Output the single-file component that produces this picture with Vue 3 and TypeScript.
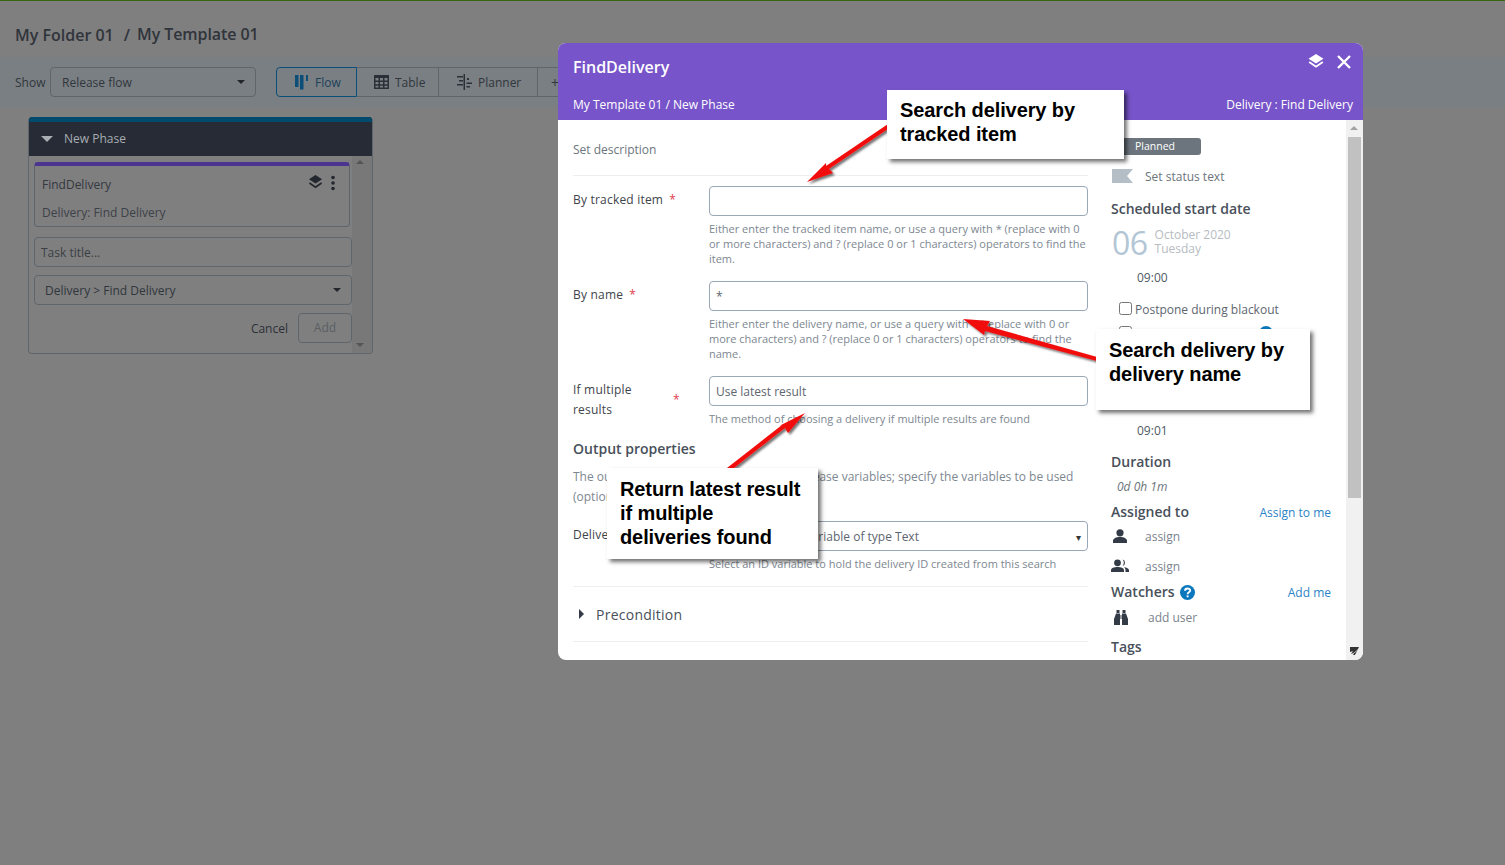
<script setup lang="ts">
interface Field {
  label: string
  value: string
  help: string[]
  wide?: boolean
}
const fields: Field[] = [
  {
    label: 'By tracked item',
    value: '',
    help: [
      'Either enter the tracked item name, or use a query with * (replace with 0',
      'or more characters) and ? (replace 0 or 1 characters) operators to find the',
      'item.'
    ]
  },
  {
    label: 'By name',
    value: '*',
    help: [
      'Either enter the delivery name, or use a query with * (replace with 0 or',
      'more characters) and ? (replace 0 or 1 characters) operators to find the',
      'name.'
    ]
  },
  {
    label: 'If multiple results',
    value: 'Use latest result',
    wide: true,
    help: ['The method of choosing a delivery if multiple results are found']
  }
]
</script>

<template>
  <div class="page">
    <div class="topline"></div>
    <div class="crumbs"><span class="c-a">My Folder 01</span><span class="sep">/</span><span class="c-b">My Template 01</span></div>
    <div class="toolbar">
      <span class="show">Show</span>
      <div class="dark-select release"><span>Release flow</span><i class="caret"></i></div>
      <div class="tabs">
        <div class="tab active">
          <svg width="13" height="15" viewBox="0 0 13 15"><path fill="#0b4f78" d="M0 0h3.500v12H0zM5 0h3.500v14.500H5zM11 0h2v6h-2z"/></svg>
          <span>Flow</span>
        </div>
        <div class="tab t-table">
          <svg width="15" height="14" viewBox="0 0 15 14"><path fill="#2b3038" d="M0 0h15v14H0zm1.500 3v2.500h3V3zm4.500 0v2.500h3V3zm4.500 0v2.500h3V3zM1.500 7v2.300h3V7zM6 7v2.300h3V7zm4.500 0v2.300h3V7zm-9 3.800v1.700h3v-1.700zm4.500 0v1.700h3v-1.700zm4.500 0v1.700h3v-1.700z"/></svg>
          <span>Table</span>
        </div>
        <div class="tab t-plan">
          <svg width="15" height="16" viewBox="0 0 15 16"><path fill="#2b3038" d="M6.500 0H8v16H6.500zM0 2h6v1.600H0zM2 6h4v1.600H2zM0 10h6v1.600H0zM10 4h2v2h-2zM9.500 8.500H15v1.600H9.500zM9.500 12H13v1.600H9.500z"/></svg>
          <span>Planner</span>
        </div>
        <div class="tab stub">+</div>
      </div>
    </div>

    <div class="phase">
      <div class="phase-head"><i class="caret-lg"></i><span>New Phase</span></div>
      <div class="phase-body">
        <div class="phase-main">
          <div class="card">
            <div class="card-title">
              <span>FindDelivery</span>
              <span class="card-icons">
                <svg width="15" height="15" viewBox="0 0 16 16"><path fill="#23272e" d="M8 0l7 4.500L8 9 1 4.500z"/><path fill="none" stroke="#23272e" stroke-width="1.800" d="M1.500 8.500L8 13l6.500-4.500"/></svg>
                <svg width="6" height="16" viewBox="0 0 6 16"><circle cx="3" cy="2.500" r="1.800" fill="#23272e"/><circle cx="3" cy="8" r="1.800" fill="#23272e"/><circle cx="3" cy="13.500" r="1.800" fill="#23272e"/></svg>
              </span>
            </div>
            <div class="card-sub">Delivery: Find Delivery</div>
          </div>
          <div class="dark-input task">Task title...</div>
          <div class="dark-select kind"><span>Delivery &gt; Find Delivery</span><i class="caret"></i></div>
          <div class="phase-actions"><span>Cancel</span><div class="add">Add</div></div>
        </div>
        <div class="phase-scroll"><i class="up"></i><i class="down"></i></div>
      </div>
    </div>

    <div class="modal">
      <div class="modal-head">
        <div class="head-row">
          <span class="modal-title">FindDelivery</span>
          <span class="head-icons">
            <svg width="16" height="15" viewBox="0 0 16 15"><path fill="#fff" d="M8 0l7.500 4.700L8 9.400.5 4.700z"/><path fill="none" stroke="#fff" stroke-width="1.800" d="M1.200 8L8 12.700 14.800 8"/></svg>
            <svg width="14" height="14" viewBox="0 0 14 14"><path stroke="#fff" stroke-width="2.400" d="M1 1l12 12M13 1L1 13"/></svg>
          </span>
        </div>
        <div class="sub-row"><span>My Template 01 / New Phase</span><span>Delivery : Find Delivery</span></div>
      </div>

      <div class="modal-body">
        <div class="left">
          <div class="desc">Set description</div>
          <div v-for="f in fields" :key="f.label" class="field">
            <div class="label" :class="{ wrap: f.wide }"><span class="label-text">{{ f.label }}</span><span class="star">*</span></div>
            <div>
              <div class="input">{{ f.value }}</div>
              <div class="help"><div v-for="line in f.help" :key="line">{{ line }}</div></div>
            </div>
          </div>
          <div class="out-title">Output properties</div>
          <div class="out-text">The output properties of this task are in release variables; specify the variables to be used<br />(optional)</div>
          <div class="field last">
            <div class="label"><span class="label-text">Delivery ID</span></div>
            <div>
              <div class="input select-input"><span>Select a release variable of type Text</span><i>▾</i></div>
              <div class="help">Select an ID variable to hold the delivery ID created from this search</div>
            </div>
          </div>
          <div class="section"><i class="tri"></i><span>Precondition</span></div>
        </div>

        <div class="right">
          <div class="badge">Planned</div>
          <div class="status">
            <svg width="21" height="14" viewBox="0 0 21 14"><path fill="#b3bec7" d="M0 0h21l-6 7 6 7H0z"/></svg>
            <span class="low">Set status text</span>
          </div>
          <div class="h r-sched">Scheduled start date</div>
          <div class="date">
            <span class="day">06</span>
            <span class="month"><span>October 2020</span><span>Tuesday</span></span>
          </div>
          <div class="time t1">09:00</div>
          <label class="check c1"><input type="checkbox" /><span class="low">Postpone during blackout</span></label>
          <div class="check c2"><input type="checkbox" /><span class="dot"></span></div>
          <div class="time t2">09:01</div>
          <div class="h r-dur">Duration</div>
          <div class="dur">0d 0h 1m</div>
          <div class="split r-assign"><span class="h">Assigned to</span><a class="low">Assign to me</a></div>
          <div class="who w1">
            <svg width="16" height="14" viewBox="0 0 16 14"><circle cx="8" cy="3.800" r="3.600" fill="#333b47"/><path fill="#333b47" d="M1 14v-2c0-2.500 3-4 7-4s7 1.500 7 4v2z"/></svg>
            <span class="low">assign</span>
          </div>
          <div class="who w2">
            <svg width="18" height="14" viewBox="0 0 18 14"><circle cx="6.500" cy="3.800" r="3.400" fill="#333b47"/><path fill="#333b47" d="M11.500.600a3.300 3.300 0 010 6.400 5 5 0 000-6.400z"/><path fill="#333b47" d="M0 13v-1.800C0 9 3 8 6.500 8s6.500 1 6.500 3.200V13z"/><path fill="#333b47" d="M13 8.300c2.700.3 5 1.300 5 3V13h-3.500v-2c0-1-.6-2-1.500-2.700z"/></svg>
            <span class="low">assign</span>
          </div>
          <div class="split r-watch">
            <span class="watch"><span class="h">Watchers</span><svg width="15" height="15" viewBox="0 0 16 16"><circle cx="8" cy="8" r="8" fill="#0b78bd"/><path fill="none" stroke="#fff" stroke-width="2" d="M5.300 6.200c0-3.300 5.600-3.300 5.600-.3 0 1.900-2.800 2-2.800 3.900"/><circle cx="8.100" cy="12" r="1.200" fill="#fff"/></svg></span>
            <a class="low">Add me</a>
          </div>
          <div class="who w3">
            <svg width="14" height="15" viewBox="0 0 14 15"><path fill="#333b47" d="M2.500 0h3v3h-3zM8.500 0h3v3h-3zM2 3.500h4V15H0V9zM8 3.500h4L14 9v6H8zM6.500 5h1v4h-1z"/></svg>
            <span class="low">add user</span>
          </div>
          <div class="h r-tags">Tags</div>
        </div>

        <div class="modal-scroll">
          <i class="up"></i>
          <div class="thumb"></div>
          <svg class="grip" width="9" height="8" viewBox="0 0 9 8"><path fill="#333" d="M0 0h9L5 8H3l1-2-3 1 2-3-3 1z"/><path fill="none" stroke="#eee" stroke-width=".7" d="M2 7.500L9 2M5 8l4-3"/></svg>
        </div>
      </div>
    </div>

    <svg class="arrows" width="1505" height="865" viewBox="0 0 1505 865">
      <defs>
        <filter id="arrow-shadow" x="-20%" y="-20%" width="150%" height="150%">
          <feDropShadow dx="2" dy="2" stdDeviation="1.200" flood-color="#000" flood-opacity=".55" />
        </filter>
      </defs>
      <g fill="#f20d0d" filter="url(#arrow-shadow)">
        <path d="M888 124v5l-59 40 4 4-26 9 19-19 0 3z" />
        <path d="M963 319l27 2-3 5 110 31v4l-112-30-1 4z" />
        <path d="M805 413l-17 20-3-5-51 40h-7l55-43-3 1z" />
      </g>
    </svg>

    <div class="callout one">Search delivery by<br />tracked item</div>
    <div class="callout two">Search delivery by<br />delivery name</div>
    <div class="callout three">Return latest result<br />if multiple<br />deliveries found</div>
  </div>
</template>

<style>
html, body { margin: 0; padding: 0; background: #7f7f7f; }
</style>

<style scoped>
.page {
  position: relative;
  width: 1505px;
  height: 865px;
  overflow: hidden;
  background: #7f7f7f;
  font-family: "Open Sans", sans-serif;
  font-size: 12px;
  color: #2c3038;
}
.topline { height: 1px; background: #37640f; }
.crumbs {
  height: 56px;
  box-sizing: border-box;
  padding: 22px 0 0 15px;
  font-size: 16px;
  line-height: 22px;
  font-weight: 600;
  color: #30343b;
  display: flex;
}
.c-a { position: relative; top: 1px; }
.c-b { letter-spacing: -.08px; }
.sep { margin: 1px 7px 0 10px; }
.toolbar {
  height: 50px;
  box-sizing: border-box;
  background: #7a7f83;
  display: flex;
  align-items: center;
  padding: 0 0 0 15px;
  color: #30363c;
}
.show { width: 35px; }
.dark-select {
  display: flex;
  align-items: center;
  justify-content: space-between;
  box-sizing: border-box;
  height: 30px;
  border: 1px solid #5e666c;
  border-radius: 4px;
  color: #30363c;
}
.release { width: 206px; padding: 0 10px 0 11px; }
.caret {
  width: 0; height: 0;
  border-left: 4px solid transparent;
  border-right: 4px solid transparent;
  border-top: 4px solid #22262c;
}
.tabs { display: flex; margin-left: 20px; height: 30px; }
.tab {
  box-sizing: border-box;
  height: 30px;
  display: flex;
  align-items: center;
  border: 1px solid #5e666c;
  border-left: 0;
  color: #30363c;
}
.active {
  width: 81px;
  border: 1px solid #0b4f78;
  border-radius: 4px 0 0 4px;
  color: #1c4159;
  padding-left: 18px;
  gap: 7px;
}
.active svg { margin-top: 1px; }
.t-table { width: 82px; padding-left: 17px; gap: 6px; }
.t-plan { width: 99px; padding-left: 18px; gap: 6px; }
.stub { width: 40px; padding-left: 13px; font-size: 14px; }

.phase {
  box-sizing: border-box;
  width: 345px;
  height: 237px;
  margin: 10px 0 0 28px;
  border: 1px solid #5f666b;
  border-top: 0;
  border-radius: 4px;
  overflow: hidden;
}
.phase-head {
  box-sizing: border-box;
  height: 39px;
  margin: 0 -1px;
  background: #262b35;
  border-top: 5px solid #004a6e;
  padding: 0 0 2px 13px;
  display: flex;
  align-items: center;
  color: #a8adb3;
  gap: 11px;
}
.caret-lg {
  width: 0; height: 0;
  margin-top: 2px;
  border-left: 6px solid transparent;
  border-right: 6px solid transparent;
  border-top: 6px solid #a8adb3;
}
.phase-body { display: flex; height: 197px; }
.phase-main { width: 323px; padding: 6px 0 0 5px; box-sizing: border-box; }
.card {
  width: 316px;
  height: 65px;
  box-sizing: border-box;
  border: 1px solid #5e666c;
  border-top: 4px solid #4b3590;
  border-radius: 4px;
  padding: 0 7px;
  color: #34383f;
}
.card-title {
  display: flex;
  justify-content: space-between;
  align-items: center;
  height: 36px;
}
.card-icons { display: flex; align-items: center; gap: 7px; padding-right: 6px; margin-top: -3px; }
.card-sub { line-height: 20px; margin-top: 1px; color: #3d4148; }
.dark-input {
  box-sizing: border-box;
  width: 318px;
  height: 30px;
  margin-top: 10px;
  border: 1px solid #5e666c;
  border-radius: 4px;
  padding-left: 6px;
  line-height: 30px;
  color: #3b3f45;
}
.kind { width: 318px; margin-top: 8px; padding: 0 10px 0 10px; }
.phase-actions {
  display: flex;
  justify-content: flex-end;
  align-items: center;
  gap: 10px;
  width: 318px;
  margin-top: 8px;
  color: #2c3038;
}
.add {
  box-sizing: border-box;
  width: 54px;
  height: 30px;
  border: 1px solid #5e666c;
  border-radius: 4px;
  text-align: center;
  line-height: 28px;
  color: #5a5f64;
}
.phase-scroll { flex: 1; background: #787878; position: relative; }
.phase-scroll .up, .modal-scroll .up {
  position: absolute; top: 4px; left: 4px;
  border-left: 4px solid transparent;
  border-right: 4px solid transparent;
  border-bottom: 4px solid #555;
}
.phase-scroll .down {
  position: absolute; bottom: 6px; left: 4px;
  border-left: 4px solid transparent;
  border-right: 4px solid transparent;
  border-top: 4px solid #555;
}

.modal {
  position: absolute;
  left: 558px;
  top: 43px;
  width: 805px;
  height: 617px;
  border-radius: 8px;
  overflow: hidden;
  background: #fff;
}
.modal-head {
  height: 77px;
  box-sizing: border-box;
  background: #7754c9;
  color: #fff;
  padding: 0 10px 0 15px;
}
.head-row { height: 48px; display: flex; justify-content: space-between; align-items: center; }
.modal-title { font-size: 16px; font-weight: 600; margin-top: -1px; }
.head-icons { display: flex; align-items: center; gap: 13px; margin: -11px 2px 0 0; }
.sub-row { display: flex; justify-content: space-between; line-height: 18px; margin-top: 5px; }
.modal-body { display: flex; height: 540px; }
.left { width: 530px; box-sizing: border-box; padding-left: 15px; flex: none; }
.desc {
  height: 56px;
  box-sizing: border-box;
  padding-top: 20px;
  line-height: 20px;
  border-bottom: 1px solid #eceeef;
  color: #6c757d;
  margin-bottom: 10px;
}
.field { display: grid; grid-template-columns: 136px 1fr; margin-bottom: 15px; }
.field.last { margin-top: 15px; margin-bottom: 0; padding-bottom: 15px; border-bottom: 1px solid #eceeef; }
.label { padding-top: 4px; line-height: 20px; letter-spacing: .2px; color: #3e444b; display: flex; }
.label-text { flex: none; }
.star { color: #e0404f; margin-left: 6px; }
.label.wrap .label-text { width: 94px; }
.label.wrap .star { margin: 10px 0 0 6px; }
.input {
  box-sizing: border-box;
  height: 30px;
  border: 1px solid #9aa7b5;
  border-radius: 4px;
  padding: 0 6px;
  line-height: 30px;
  color: #5d6670;
}
.select-input { display: flex; justify-content: space-between; font-size: 12px; }
.select-input i { font-style: normal; font-size: 10px; color: #333; }
.help {
  margin-top: 5px;
  font-size: 11px;
  line-height: 15px;
  color: #7d8791;
}
.out-title { font-size: 14px; font-weight: 600; line-height: 20px; margin-top: -2px; color: #48505a; }
.out-text { margin-top: 7px; line-height: 20px; padding-top: 1px; margin-bottom: -1px; white-space: nowrap; color: #7d8791; }
.section {
  height: 55px;
  box-sizing: border-box;
  border-bottom: 1px solid #eceeef;
  display: flex;
  align-items: center;
  gap: 12px;
  padding-left: 6px;
  font-size: 14px;
  font-weight: 500;
  letter-spacing: .25px;
  color: #48505a;
}
.tri {
  border-top: 5px solid transparent;
  border-bottom: 5px solid transparent;
  border-left: 5px solid #333b47;
}
.right {
  flex: 1;
  box-sizing: border-box;
  padding: 0 15px 0 23px;
  display: flex;
  flex-direction: column;
  color: #5d6670;
  line-height: 20px;
}
.low { position: relative; top: 1px; }
.h { font-size: 14px; font-weight: 600; color: #48505a; line-height: 20px; }
.badge {
  width: 90px;
  height: 17px;
  margin-top: 18px;
  background: #6c757d;
  border-radius: 3px;
  box-sizing: border-box;
  padding-left: 24px;
  color: #fff;
  font-size: 10.500px;
  line-height: 17px;
}
.status { margin-top: 11px; height: 20px; display: flex; align-items: center; gap: 12px; padding-left: 1px; color: #6c757d; }
.r-sched { margin-top: 13px; }
.date { height: 35px; margin-top: 6px; display: flex; align-items: center; gap: 7px; padding-left: 1px; }
.day { font-size: 32px; line-height: 35px; color: #b3c6d6; font-weight: 400; letter-spacing: -.5px; }
.month { display: flex; flex-direction: column; line-height: 14px; color: #b6bcc2; margin-top: -1px; }
.time { padding: 1px 0 0 26px; height: 20px; box-sizing: border-box; line-height: 20px; color: #4f5964; }
.t1 { margin-top: 7px; }
.t2 { margin-top: 77px; }
.check { display: flex; align-items: center; height: 20px; padding-left: 8px; gap: 3px; color: #5d6670; }
.check input { width: 13px; height: 13px; margin: -2px 0 0; }
.c1 { margin-top: 12px; }
.c2 { margin-top: 4px; position: relative; }
.dot { position: absolute; left: 148px; top: 3px; width: 14px; height: 14px; border-radius: 50%; background: #0b78bd; }
.r-dur { margin-top: 11px; padding-top: 1px; height: 20px; box-sizing: border-box; }
.dur { margin-top: 5px; padding: 1px 0 0 6px; height: 20px; box-sizing: border-box; font-style: italic; color: #6c757d; }
.split { display: flex; justify-content: space-between; align-items: center; height: 20px; }
.split a { color: #2b84c6; }
.r-assign { margin-top: 6px; }
.who { display: flex; align-items: center; height: 20px; }
.who svg { flex: none; }
.who span { color: #7a838c; }
.w1 { margin-top: 4px; padding-left: 1px; gap: 17px; }
.w2 { margin-top: 10px; gap: 16px; }
.w3 { margin-top: 5px; padding-left: 3px; gap: 20px; }
.r-watch { margin-top: 6px; }
.watch { display: flex; align-items: center; gap: 5px; }
.r-tags { margin-top: 10px; }
.modal-scroll { width: 17px; flex: none; background: #f1f1f1; position: relative; }
.modal-scroll .up { left: 4px; top: 6px; border-bottom-color: #a3a3a3; }
.thumb { position: absolute; left: 2px; top: 17px; width: 13px; height: 361px; background: #c1c1c1; }
.grip { position: absolute; right: 4px; bottom: 5px; }

.arrows { position: absolute; left: 0; top: 0; pointer-events: none; }
.callout {
  position: absolute;
  background: #fff;
  box-sizing: border-box;
  box-shadow: 3px 3px 4px rgba(0, 0, 0, .55);
  font-family: "Liberation Sans", Arial, sans-serif;
  font-size: 20px;
  font-weight: 700;
  line-height: 24px;
  letter-spacing: -.1px;
  color: #000;
  padding: 9px 0 0 13px;
}
.one { left: 887px; top: 90px; width: 237px; height: 69px; padding-top: 8px; }
.two { left: 1096px; top: 329px; width: 214px; height: 81px; }
.three { left: 607px; top: 468px; width: 211px; height: 91px; }
</style>
